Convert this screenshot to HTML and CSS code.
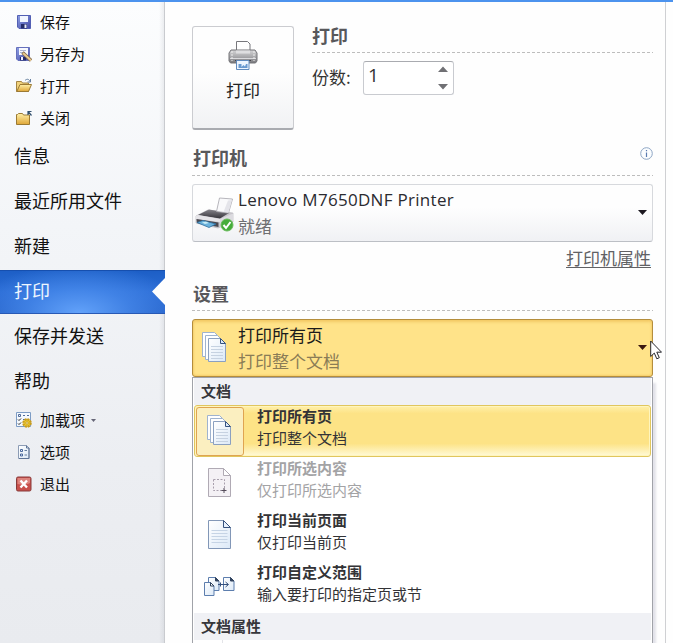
FILE: index.html
```html
<!DOCTYPE html>
<html lang="zh-CN">
<head>
<meta charset="utf-8">
<title>打印</title>
<link rel="stylesheet" href="styles.css">
</head>
<body>
<svg class="defs" width="0" height="0" aria-hidden="true">
  <defs>
    <linearGradient id="gold" x1="0" y1="0" x2="0" y2="1"><stop offset="0" stop-color="#fff0a8"/><stop offset="1" stop-color="#dfa637"/></linearGradient>
    <linearGradient id="paper" x1="0" y1="0" x2="1" y2="1"><stop offset="0" stop-color="#fff"/><stop offset="1" stop-color="#dce9f7"/></linearGradient>
    <linearGradient id="disk" x1="0" y1="0" x2="1" y2="1"><stop offset="0" stop-color="#8ea0e4"/><stop offset="1" stop-color="#4249a6"/></linearGradient>
    <linearGradient id="metal" x1="0" y1="0" x2="0" y2="1"><stop offset="0" stop-color="#d5d5d7"/><stop offset=".5" stop-color="#aaaaad"/><stop offset="1" stop-color="#77777b"/></linearGradient>
    <linearGradient id="dark" x1="0" y1="0" x2="0" y2="1"><stop offset="0" stop-color="#85838a"/><stop offset="1" stop-color="#35343a"/></linearGradient>
    <symbol id="pages" viewBox="0 0 26 32">
      <path d="M1.500 1.500h12l4 4v20h-16z" fill="#fff" stroke="#9fb3cf"/>
      <path d="M4.500 4.500h12l4 4v20h-16z" fill="#fff" stroke="#9fb3cf"/>
      <path d="M7.500 7.500h12l5 5v18h-17z" fill="url(#paper)" stroke="#8ba0c0"/>
      <path d="M19.500 7.500v5h5z" fill="#dceafa" stroke="#36527e"/>
      <path d="M10 15.500h12M10 18.500h12M10 21.500h12M10 24.500h12M10 27.500h12" stroke="#c6d2e1"/>
    </symbol>
  </defs>
</svg>
<div class="topbar"></div>
<div class="backstage">
  <nav class="sidebar">
    <a class="cmd"><svg class="ico" viewBox="0 0 16 16"><path d="M1.500 1.500h13v13H3l-1.500-1.500z" fill="url(#disk)" stroke="#5360b4"/><path d="M4 2h8v6H4z" fill="#f2f6ff"/><path d="M5 10h6v4.500H5z" fill="#252c68"/><path d="M8.500 10.500h2v3.500h-2z" fill="#e8ecfa"/></svg><span>保存</span></a>
    <a class="cmd"><svg class="ico" viewBox="0 0 16 16"><path d="M.5 1.500h13v13H2L.5 13z" fill="url(#disk)" stroke="#6670bc"/><path d="M3 2h9v7H3z" fill="#f6f8ff"/><path d="M4 4.500h6M4 6.500h5" stroke="#adb5d3"/><path d="M4 11h6v3.500H4z" fill="#252c68"/><path d="M5 11h2v3H5z" fill="#eef"/><path d="M6.500 6.500l8.500 8" stroke="#7b6548" stroke-width="3.400"/><path d="M7 7l8 7.500" stroke="#e8c88f" stroke-width="2"/></svg><span>另存为</span></a>
    <a class="cmd"><svg class="ico" viewBox="0 0 16 16"><path d="M.5 13.500v-10h5l1 1.500h6v8.500z" fill="#f1d27b" stroke="#a48443"/><path d="M.8 13.500l3.200-7h11.500l-3 7z" fill="url(#gold)" stroke="#9b7a34"/><path d="M9 2.500c2-2 4-1.500 5 1M14.500 1v3h-3" fill="none" stroke="#647f9f"/></svg><span>打开</span></a>
    <a class="cmd"><svg class="ico" viewBox="0 0 16 16"><path d="M.5 14.500V4.500h1l1-1h4l1 1.500h6v9.500z" fill="url(#gold)" stroke="#9b7a34"/><path d="M15.500 5.500L12.500 2M12 5V1.500h3.500" fill="none" stroke="#31506e" stroke-width="1.200"/></svg><span>关闭</span></a>
    <a class="tab">信息</a>
    <a class="tab">最近所用文件</a>
    <a class="tab">新建</a>
    <a class="tab active">打印</a>
    <a class="tab">保存并发送</a>
    <a class="tab">帮助</a>
    <a class="cmd"><svg class="ico" viewBox="0 0 16 16"><path d="M.5.5h14v14H.5z" fill="#f5f9fe" stroke="#7d9cc5"/><path d="M2.500 2.500h2v2h-2zM7 3.500h2M11 3.500h2M7 7.500h5" fill="none" stroke="#506b9a"/><path d="M2 7.500l1 1 2-2M2 11.500l1 1 2-2" fill="none" stroke="#222"/><circle cx="11" cy="11" r="3.700" fill="#edc72d" stroke="#c99c1c" stroke-width="2.200" stroke-dasharray="2 .9"/><circle cx="11" cy="11" r="1.200" fill="#fff2b0" stroke="#a77e13" stroke-width=".6"/></svg><span>加载项</span><svg class="tiny" viewBox="0 0 5 3"><path d="M0 0h5L2.500 3z" fill="#667"/></svg></a>
    <a class="cmd"><svg class="ico" viewBox="0 0 16 16"><path d="M2.500 1.500h8l2.500 2.500v10.500H2.500z" fill="url(#paper)" stroke="#8c9cb5"/><path d="M10.500 1.500V4H13M13 4v10.500H3" fill="none" stroke="#5e7497"/><path d="M4.500 5.500h2v2h-2zM4.500 10h2v2h-2z" fill="#eef" stroke="#49699c"/><path d="M8.500 6.500h2.500M8.500 11h2.500" stroke="#667d9e"/></svg><span>选项</span></a>
    <a class="cmd"><svg class="ico" viewBox="0 0 16 16"><rect x=".5" y="1" width="14.500" height="14" rx="1.500" fill="#c84f4a" stroke="#873b3a"/><path d="M1.500 2h12.500v5c-4 2-8 2-12.500 1z" fill="#e69a91" opacity=".7"/><path d="M4.500 4.500l6.500 7M11 4.500l-6.500 7" stroke="#fff" stroke-width="2.400"/></svg><span>退出</span></a>
  </nav>
  <main class="main">
    <section class="print-row">
      <button class="print-btn">
        <svg width="30" height="32" viewBox="0 0 30 32"><path d="M8.500 11V1.500h11l2.500 2.500v7" fill="#fff" stroke="#77777c"/><path d="M3 10h24l2 3v8l-1.500 2h-25L1 21v-8z" fill="url(#metal)" stroke="#747479"/><path d="M8 10.500h14v3H8z" fill="#dedee0"/><path d="M2 18.500h26" stroke="#dadadd"/><path d="M4 11v10M26 11v10" stroke="#eee" stroke-dasharray="2 1"/><path d="M7 20.500h16" stroke="#45454a"/><path d="M8.500 20.500h12.500v9H8.500z" fill="#edf5ff" stroke="#608abd"/><path d="M10.500 28v-4h3v3l2-2 1.500 1.500 1-2.500h1.500v4z" fill="#6a9ad0"/></svg>
        <span>打印</span>
      </button>
      <div class="print-opts">
        <h2>打印</h2>
        <div class="copies"><label>份数:</label>
          <div class="spin"><span>1</span><svg width="10" height="24" viewBox="0 0 10 24"><path d="M0 6h10L5 .5zM0 18h10l-5 5.500z" fill="#707074"/></svg></div>
        </div>
      </div>
    </section>
    <section class="printer">
      <h2>打印机<svg class="info" width="13" height="13" viewBox="0 0 13 13"><circle cx="6.500" cy="6.500" r="5.800" fill="#fbfdff" stroke="#8da5c4"/><path d="M6.500 5.500v4.500M6.500 3v1.300" stroke="#5a7bb0" stroke-width="1.200"/></svg></h2>
      <div class="select">
        <svg class="dev" width="42" height="38" viewBox="0 0 42 38"><path d="M2 21l12-6 25 3v9l-15 6-22-5z" fill="#c9c7cd" stroke="#b4b2b9" stroke-width=".6"/><path d="M4 20l11-5.500L35 18l-9 5.500z" fill="url(#dark)"/><path d="M2 21l2-1 22 4v3L2 24z" fill="#e6e5e9"/><path d="M2.500 24l22 3.500V32L3 28z" fill="#4a4950"/><path d="M3 27.500l6-2 13 3.500-7 3.500z" fill="#6bb2dc" stroke="#2f6f9e" stroke-width=".8"/><path d="M8 27.500l4-1 3 1.500-4 1z" fill="#c7ecf6"/><path d="M26 24l13-5.500V26l-13 6z" fill="#dcdbe0"/><path d="M25.500 3l13 1-4 14-12-1.500z" fill="#f9f9fb" stroke="#a5a3ab" stroke-width=".8"/><path d="M34 5.500l4-.5-3.500 12.500-5-.5z" fill="#e4e4ea"/><circle cx="33" cy="30" r="6" fill="#46ad3b" stroke="#69bb5b"/><path d="M29.500 30l2.500 3 4.500-6" fill="none" stroke="#fff" stroke-width="2"/></svg>
        <div class="label"><span class="dev-name">Lenovo M7650DNF Printer</span><span class="sub">就绪</span></div>
        <svg class="arrow" width="9" height="5" viewBox="0 0 9 5"><path d="M0 0h9L4.500 5z" fill="#1c1820"/></svg>
      </div>
      <a class="props">打印机属性</a>
    </section>
    <section class="settings">
      <h2>设置</h2>
      <div class="select open">
        <svg class="pages-ico" width="26" height="32"><use href="#pages"/></svg>
        <div class="label"><span>打印所有页</span><span class="sub">打印整个文档</span></div>
        <svg class="arrow" width="9" height="5" viewBox="0 0 9 5"><path d="M0 0h9L4.500 5z" fill="#3a1810"/></svg>
        <svg class="cursor" width="12" height="20" viewBox="0 0 12 20"><path d="M.7 1v15.500l3.600-3.400 2.500 5.700 2.500-1.100-2.500-5.500h4.700z" fill="#fff" stroke="#26262c"/></svg>
      </div>
      <div class="menu">
        <h3>文档</h3>
        <div class="item selected"><div class="slot"><svg width="26" height="32"><use href="#pages"/></svg></div><div class="text"><b>打印所有页</b><span>打印整个文档</span></div></div>
        <div class="item disabled"><div class="slot"><svg width="24" height="30" viewBox="0 0 24 30"><path d="M.5.5h15l7 7v21H.5z" fill="#f4f1f5" stroke="#b0aab4"/><path d="M15.500.5v7h7z" fill="#fff" stroke="#b0aab4"/><path d="M5.500 11.500h11v11h-11z" fill="none" stroke="#a89fac" stroke-dasharray="2 1.500"/><path d="M13.500 22.500h5M16 20v5" stroke="#554c5a"/></svg></div><div class="text"><b>打印所选内容</b><span>仅打印所选内容</span></div></div>
        <div class="item"><div class="slot"><svg width="24" height="30" viewBox="0 0 24 30"><path d="M.5.5h15l7 7v21H.5z" fill="url(#paper)" stroke="#8297b7"/><path d="M15.500.5v7h7z" fill="#e7f1fd" stroke="#36527e"/><path d="M3.500 10.500h16M3.500 13.500h16M3.500 16.500h16M3.500 19.500h16M3.500 22.500h16" stroke="#c6d4e5"/></svg></div><div class="text"><b>打印当前页面</b><span>仅打印当前页</span></div></div>
        <div class="item"><div class="slot"><svg width="32" height="21" viewBox="0 0 32 21"><path d="M4.500 1.500h7l3.500 3.500v9.500H4.500z" fill="url(#paper)" stroke="#5d7eae"/><path d="M11.500 1.500V5H15z" fill="#30435f" stroke="#30435f"/><path d="M.5 6.500h6L10 10v9.500H.5z" fill="url(#paper)" stroke="#5d7eae"/><path d="M6.500 6.500V10H10z" fill="#fff" stroke="#30435f"/><path d="M19.500 1.500h7L30 5v9.500H19.500z" fill="url(#paper)" stroke="#5d7eae"/><path d="M26.500 1.500V5H30z" fill="#30435f" stroke="#30435f"/><path d="M14 8.500h10M21.500 6l3 2.500-3 2.500M16.500 6.500v4" fill="none" stroke="#334f7c"/></svg></div><div class="text"><b>打印自定义范围</b><span>输入要打印的指定页或节</span></div></div>
        <h3>文档属性</h3>
        <div class="next-item"></div>
      </div>
    </section>
  </main>
</div>
</body>
</html>
```
FILE: styles.css
```css
* { box-sizing: border-box; }
html, body { margin: 0; height: 643px; overflow: hidden; }
body {
  background: #fefefe;
  color: #1b1b1b;
  font-family: "Open Sans", "Noto Sans CJK SC", sans-serif;
}
.defs { position: absolute; }
svg { display: block; flex: none; }
.topbar { height: 2px; background: #4c93ee; }
.backstage { display: flex; height: 641px; }

.sidebar {
  width: 165px;
  flex: none;
  padding-top: 4px;
  border-right: 1px solid #c9cbcf;
  background: linear-gradient(to left, rgba(150, 155, 165, .16), transparent 5px), linear-gradient(#fcfdfe, #f3f5f8 35%, #eceef2 72%, #e9ebef);
}
.cmd {
  display: flex;
  align-items: center;
  height: 32px;
  padding-left: 16px;
  font: 15px/22px "Noto Sans CJK SC", sans-serif;
  color: #111;
}
.ico { width: 16px; height: 16px; margin-right: 8px; }
.tiny { width: 5px; height: 3px; margin-left: 6px; }
.tab {
  display: block;
  height: 45px;
  padding-left: 14px;
  font: 18px/43px "Noto Sans CJK SC", sans-serif;
  color: #111;
}
.tab.active {
  position: relative;
  width: 165px;
  height: 44px;
  margin-top: 1px;
  line-height: 39px;
  color: #eef6ff;
  background: radial-gradient(ellipse 105px 50px at 48% 100%, #62a2fa, rgba(76, 143, 240, .65) 50%, transparent), linear-gradient(#1d5fc6, #2a6bd4 50%, #2561c8);
  border-top: 1px solid #164fae;
  border-bottom: 1px solid #2859b5;
}
.tab.active::after {
  content: "";
  position: absolute;
  right: 0;
  top: 7px;
  width: 13px;
  height: 27px;
  background: #fefefe;
  clip-path: polygon(100% 0, 0 50%, 100% 100%);
}

.main {
  width: 501px;
  flex: none;
  padding: 24px 12px 0 27px;
  border-right: 1px solid #cfd0d3;
}
h2 {
  display: flex;
  justify-content: space-between;
  align-items: center;
  height: 36px;
  margin: 0;
  padding-bottom: 2px;
  font: bold 18px/32px "Noto Sans CJK SC", sans-serif;
  color: #58585b;
  background: repeating-linear-gradient(90deg, #bdbdbd 0 3px, transparent 3px 5px) left bottom / 100% 1px no-repeat;
}
.info { margin-bottom: 7px; }
.printer h2, .settings h2 { text-indent: 1px; }
.print-row { display: flex; gap: 18px; height: 114px; }
.print-btn {
  display: flex;
  flex-direction: column;
  align-items: center;
  gap: 6px;
  width: 102px;
  height: 104px;
  padding: 13px 0 0;
  border: 1px solid #cbccd0;
  border-bottom: 2px solid #a9abb0;
  border-radius: 3px;
  background: linear-gradient(#fefefe 45%, #f1f2f4);
  font: 17px/24px "Noto Sans CJK SC", sans-serif;
  color: #222;
}
.print-opts { flex: 1; }
.print-opts h2 { height: 27px; padding-bottom: 9px; }
.copies {
  display: flex;
  align-items: center;
  height: 50px;
  font: 17px/24px "Noto Sans CJK SC", sans-serif;
  color: #333;
}
.copies label { width: 51px; padding-bottom: 2px; }
.spin {
  display: flex;
  justify-content: space-between;
  width: 91px;
  height: 34px;
  padding: 4px 5px 4px 4px;
  border: 1px solid #c9cbd0;
  border-top-color: #a9abb0;
  border-radius: 3px;
  background: #fff;
  font: 19px/19px "Open Sans", sans-serif;
}
.select {
  position: relative;
  display: flex;
  align-items: center;
  height: 58px;
  margin-top: 8px;
  border: 1px solid #d7d9dd;
  border-bottom-color: #bcbfc5;
  border-radius: 3px;
  background: linear-gradient(#fefefe 40%, #f0f1f4);
}
.dev { margin: 2px 2px 0 1px; }
.label {
  display: flex;
  flex-direction: column;
  flex: 1;
  font: 17px/26px "Noto Sans CJK SC", sans-serif;
}
.dev-name { font-family: "Open Sans", sans-serif; letter-spacing: .3px; color: #2b2b30; }
.sub { color: #6f6f72; }
.arrow { margin: 0 5px 2px 0; }
.props {
  display: block;
  width: max-content;
  margin: 3px 2px 1px auto;
  font: 17px/26px "Noto Sans CJK SC", sans-serif;
  color: #616164;
  text-decoration: underline;
  text-underline-offset: 2px;
  text-decoration-thickness: 1px;
}
.settings h2 { height: 39px; padding: 2px 0 0; }
.select.open {
  border-color: #b48d3c;
  background: #ffe389;
  box-shadow: inset 0 2px 3px rgba(225, 165, 50, .4), inset 0 -1px 2px rgba(225, 165, 50, .35);
}
.open .sub { color: #8a7c56; }
.pages-ico { margin: 0 11px 2px 8px; }
.cursor { position: absolute; left: 457px; top: 20px; }
.menu {
  width: 461px;
  height: 266px;
  border: 1px solid #a1a3a9;
  border-bottom: 0;
  background: #fff;
  box-shadow: 3px 6px 2px #e3e3ea;
}
h3 {
  height: 27px;
  margin: 0 1px;
  padding-left: 7px;
  background: #f0f1f5;
  font: bold 15px/25px "Noto Sans CJK SC", sans-serif;
  color: #36363b;
}
.item {
  display: flex;
  height: 52px;
  margin: 0 1px;
  padding: 0 1px;
}
.slot {
  display: flex;
  align-items: center;
  justify-content: center;
  width: 48px;
  height: 49px;
  margin: 1px 0 0 1px;
}
.text {
  display: flex;
  flex-direction: column;
  margin-left: 13px;
  font: 15px/22px "Noto Sans CJK SC", sans-serif;
  color: #333336;
}
.disabled .text { color: #a3a3a5; }
.selected {
  padding: 0;
  border: 1px solid #e0c65e;
  border-radius: 3px;
  background: linear-gradient(#fff0a9, #fde386 15%, #fde386 75%, #fffad8);
  box-shadow: inset 0 0 0 1px #fff5bd;
}
.selected .text { margin-top: -1px; }
.selected .slot {
  border: 1px solid #dfa451;
  border-radius: 3px;
  background: #fbefc0;
  padding: 0 2px 3px 0;
}
.next-item { width: 30px; height: 8px; border-right: 1px solid #e3e4e8; }
```
